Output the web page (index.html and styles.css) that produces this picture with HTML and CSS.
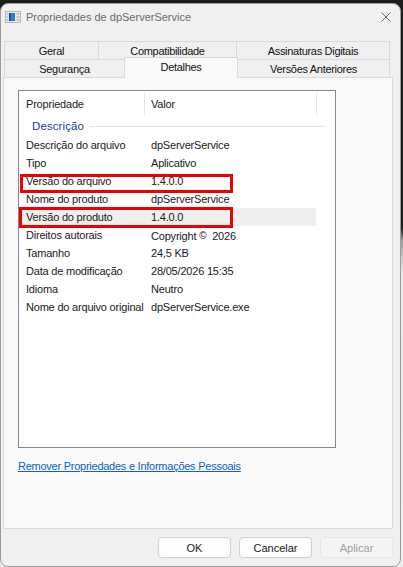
FILE: index.html
```html
<!DOCTYPE html>
<html lang="pt-BR">
<head>
<meta charset="utf-8">
<title>Propriedades de dpServerService</title>
<link rel="stylesheet" href="styles.css">
</head>
<body>
<div class="window">
  <div class="titlebar">
    <svg class="app-icon" width="16" height="12" viewBox="0 0 16 12" aria-hidden="true">
      <rect x="0.5" y="0.5" width="15" height="11" fill="#ececec" stroke="#b8b8b8"/>
      <rect x="4" y="2" width="6" height="8" fill="#2a7ddc"/>
      <rect x="4" y="2" width="1.5" height="8" fill="#0d3f92"/>
      <rect x="1.5" y="2.5" width="1.5" height="1" fill="#9a9a9a"/>
      <rect x="1.5" y="5.5" width="1.5" height="1" fill="#9a9a9a"/>
      <rect x="1.5" y="8.5" width="1.5" height="1" fill="#9a9a9a"/>
      <rect x="11.5" y="2.5" width="3" height="1" fill="#9a9a9a"/>
      <rect x="11.5" y="5.5" width="3" height="1" fill="#9a9a9a"/>
      <rect x="11.5" y="8.5" width="3" height="1" fill="#9a9a9a"/>
    </svg>
    <span class="title">Propriedades de dpServerService</span>
    <svg class="close" width="10" height="10" viewBox="0 0 10 10" aria-hidden="true">
      <path d="M0.5 0.5 L9.5 9.5 M9.5 0.5 L0.5 9.5" stroke="#6b6b6b" stroke-width="1" fill="none"/>
    </svg>
  </div>

  <div class="body">
    <div class="tabs">
      <div class="tab-row">
        <div class="tab tab-geral">Geral</div>
        <div class="tab tab-compat">Compatibilidade</div>
        <div class="tab tab-assin">Assinaturas Digitais</div>
      </div>
      <div class="tab-row">
        <div class="tab tab-seg">Segurança</div>
        <div class="tab tab-det selected">Detalhes</div>
        <div class="tab tab-vers">Versões Anteriores</div>
      </div>
    </div>

    <div class="panel">
      <div class="list">
        <div class="list-header">
          <div class="hcell hcell-prop">Propriedade</div>
          <div class="hcell hcell-val">Valor</div>
        </div>
        <div class="group">
          <span class="group-name">Descrição</span>
          <span class="group-line"></span>
        </div>
        <div class="row"><span class="c-prop">Descrição do arquivo</span><span class="c-val">dpServerService</span></div>
        <div class="row"><span class="c-prop">Tipo</span><span class="c-val">Aplicativo</span></div>
        <div class="row"><span class="c-prop">Versão do arquivo</span><span class="c-val">1.4.0.0</span></div>
        <div class="row"><span class="c-prop">Nome do produto</span><span class="c-val">dpServerService</span></div>
        <div class="row hot"><span class="c-prop">Versão do produto</span><span class="c-val">1.4.0.0</span></div>
        <div class="row"><span class="c-prop">Direitos autorais</span><span class="c-val">Copyright <span class="copy">©</span> 2026</span></div>
        <div class="row"><span class="c-prop">Tamanho</span><span class="c-val">24,5 KB</span></div>
        <div class="row"><span class="c-prop">Data de modificação</span><span class="c-val">28/05/2026 15:35</span></div>
        <div class="row"><span class="c-prop">Idioma</span><span class="c-val">Neutro</span></div>
        <div class="row"><span class="c-prop">Nome do arquivo original</span><span class="c-val">dpServerService.exe</span></div>

        <div class="mark mark-file"></div>
        <div class="mark mark-product"></div>
      </div>
      <a class="link" href="#">Remover Propriedades e Informações Pessoais</a>
    </div>

    <div class="buttons">
      <button class="btn">OK</button>
      <button class="btn">Cancelar</button>
      <button class="btn disabled" disabled>Aplicar</button>
    </div>
  </div>
</div>
</body>
</html>
```

FILE: styles.css
```css
html, body {
  margin: 0;
  padding: 0;
}

body {
  width: 403px;
  height: 567px;
  overflow: hidden;
  background: linear-gradient(to bottom, #1c1c1c 0, #1c1c1c 228px, #9a9a9a 240px, #e6e6e6 270px, #eeeeee 100%);
  font-family: "Liberation Sans", Arial, sans-serif;
  color: #1a1a1a;
}

.window {
  box-sizing: border-box;
  width: 401px;
  height: 564px;
  margin-top: 3px;
  border: 1px solid #9c9c9c;
  border-radius: 8px;
  background: #f0f0f0;
  display: flex;
  flex-direction: column;
  overflow: hidden;
}

/* Title bar */
.titlebar {
  height: 25px;
  display: flex;
  align-items: center;
  flex-shrink: 0;
}

.app-icon {
  margin-left: 4px;
  flex-shrink: 0;
}

.title {
  margin-left: 5px;
  font-size: 11px;
  color: #6a6a6a;
  flex: 1;
  white-space: nowrap;
}

.close {
  margin-right: 9px;
  flex-shrink: 0;
}

/* Body */
.body {
  padding: 12px 0 0 2px;
  display: flex;
  flex-direction: column;
}

.tabs {
  margin-left: 1px;
  display: flex;
  flex-direction: column;
}

.tab-row {
  display: flex;
  height: 18px;
}

.tab {
  box-sizing: border-box;
  height: 18px;
  border: 1px solid #d9d9d9;
  border-bottom: none;
  background: #f0f0f0;
  font-size: 11px;
  letter-spacing: -0.3px;
  display: flex;
  align-items: center;
  justify-content: center;
  white-space: nowrap;
  color: #111;
}

.tab + .tab {
  margin-left: -1px;
}

.tab-geral { width: 95px; }
.tab-compat { width: 139px; }
.tab-assin { width: 154px; }
.tab-seg { width: 121px; }
.tab-det { width: 114px; }
.tab-vers { width: 153px; }

.tab.selected {
  position: relative;
  z-index: 1;
  margin-top: -2px;
  height: 21px;
  padding-bottom: 3px;
  background: #f9f9f9;
}

/* Panel */
.panel {
  box-sizing: border-box;
  width: 390px;
  height: 452px;
  border: 1px solid #dadada;
  background: #f9f9f9;
  padding: 12px 0 0 14px;
}

.list {
  position: relative;
  box-sizing: border-box;
  width: 318px;
  height: 358px;
  border: 1px solid #828790;
  background: #ffffff;
  font-size: 11px;
  letter-spacing: -0.2px;
}

.list-header {
  display: flex;
  height: 25px;
}

.hcell {
  box-sizing: border-box;
  margin-top: 2px;
  height: 22px;
  line-height: 22px;
  border-right: 1px solid #e5e5e5;
  white-space: nowrap;
}

.hcell-prop {
  width: 126px;
  padding-left: 7px;
}

.hcell-val {
  width: 172px;
  padding-left: 6px;
}

.group {
  height: 20px;
  display: flex;
  align-items: center;
  padding-left: 13px;
  padding-right: 10px;
}

.group-name {
  color: #213d96;
  font-size: 11.5px;
  letter-spacing: 0.1px;
}

.group-line {
  flex: 1;
  height: 1px;
  margin-left: 6px;
  background: #dfe6ee;
}

.row {
  box-sizing: border-box;
  display: flex;
  width: 297px;
  height: 18px;
  padding-top: 1px;
  line-height: 17px;
  white-space: nowrap;
}

.row.hot {
  background: #efefef;
}

.c-prop {
  box-sizing: border-box;
  width: 126px;
  padding-left: 7px;
}

.c-val {
  padding-left: 6px;
}

.copy {
  font-size: 10px;
  vertical-align: 1px;
  margin-right: 3px;
}

.mark {
  position: absolute;
  box-sizing: border-box;
  border: 3px solid #ee0000;
}

.mark-file {
  left: 1px;
  top: 83px;
  width: 213px;
  height: 19px;
}

.mark-product {
  left: 0;
  top: 116px;
  width: 214px;
  height: 21px;
}

.link {
  display: inline-block;
  margin-top: 11px;
  line-height: 14px;
  font-size: 11px;
  letter-spacing: -0.25px;
  color: #0a64c8;
  text-decoration: underline;
}

/* Buttons */
.buttons {
  display: flex;
  justify-content: flex-end;
  gap: 8px;
  margin-top: 8px;
  padding-right: 7px;
}

.btn {
  box-sizing: border-box;
  width: 73px;
  height: 21px;
  border: 1px solid #d0d0d0;
  border-radius: 4px;
  background: #fdfdfd;
  font-family: "Liberation Sans", Arial, sans-serif;
  font-size: 11px;
  color: #1a1a1a;
  padding: 0;
}

.btn.disabled {
  border-color: #e6e6e6;
  background: #f5f5f5;
  color: #a0a0a0;
}
```
